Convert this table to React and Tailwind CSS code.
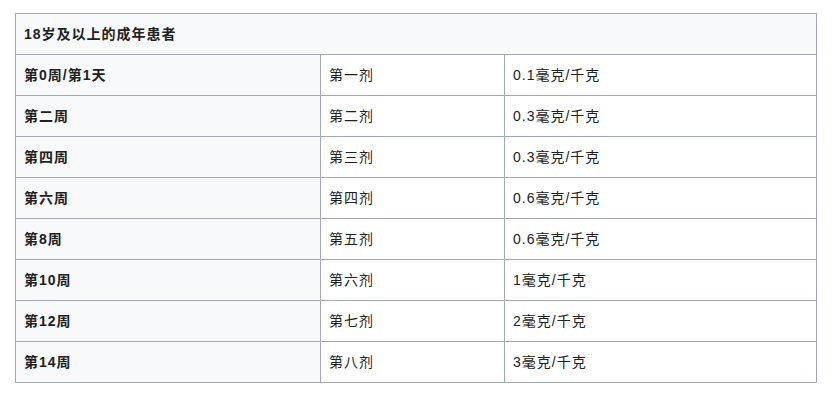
const rows = [
  ["第0周/第1天", "第一剂", "0.1毫克/千克"],
  ["第二周", "第二剂", "0.3毫克/千克"],
  ["第四周", "第三剂", "0.3毫克/千克"],
  ["第六周", "第四剂", "0.6毫克/千克"],
  ["第8周", "第五剂", "0.6毫克/千克"],
  ["第10周", "第六剂", "1毫克/千克"],
  ["第12周", "第七剂", "2毫克/千克"],
  ["第14周", "第八剂", "3毫克/千克"],
];

const App = () => {
  return (
    <div
      className="bg-white w-[832px] h-[395px] pt-[13px] pl-[15px] text-[#202122] text-[14px] tracking-[1px]"
      style={{ fontFamily: '"Liberation Sans", "Noto Sans CJK SC", sans-serif' }}
    >
      <table className="border-collapse w-[802px] border border-[#a2a9b1]">
        <thead>
          <tr className="h-[41px]">
            <th
              colSpan={3}
              className="bg-[#f8f9fa] border border-[#a2a9b1] px-2 text-left font-bold"
            >
              18岁及以上的成年患者
            </th>
          </tr>
        </thead>
        <tbody>
          {rows.map(([week, dose, amount]) => (
            <tr key={week} className="h-[41px]">
              <th className="bg-[#f8f9fa] border border-[#a2a9b1] px-2 text-left font-bold w-[305px]">
                {week}
              </th>
              <td className="border border-[#a2a9b1] px-2 w-[184px]">{dose}</td>
              <td className="border border-[#a2a9b1] px-2">{amount}</td>
            </tr>
          ))}
        </tbody>
      </table>
    </div>
  );
};

export default App;
